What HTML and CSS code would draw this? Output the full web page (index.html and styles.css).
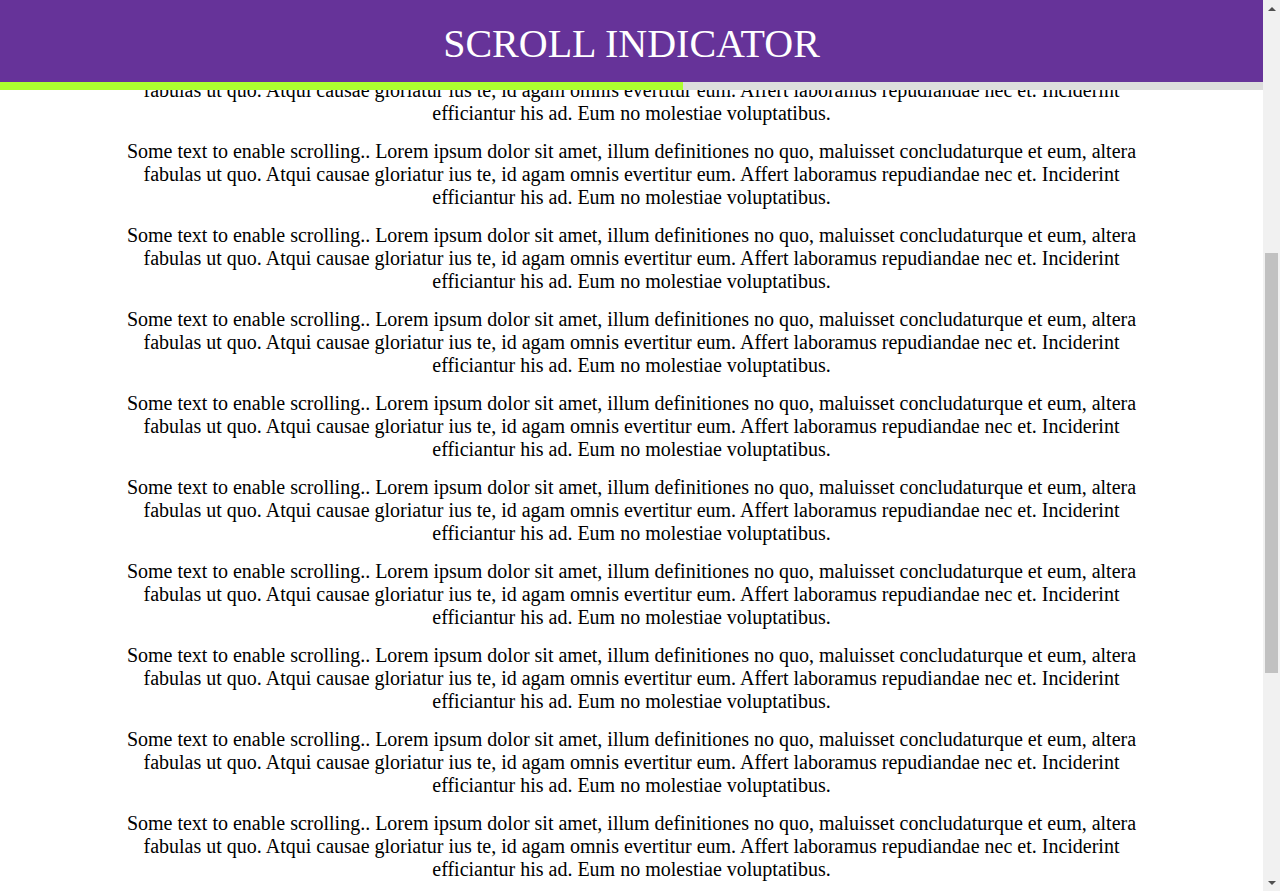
FILE: index.html
```html
<!DOCTYPE html>
<html lang="en">
<head>
<meta charset="utf-8">
<title>Scroll Indicator</title>
<link rel="stylesheet" href="styles.css">
</head>
<body>
<div class="window">
  <div class="viewport">
    <header class="header">
      <div class="title-bar"><h1 class="title">SCROLL INDICATOR</h1></div>
      <div class="progress-container"><div class="progress-bar" style="width: 54.1%"></div></div>
    </header>
    <main class="content">
      <p>Some text to enable scrolling.. Lorem ipsum dolor sit amet, illum definitiones no quo, maluisset concludaturque et eum, altera fabulas ut quo. Atqui causae gloriatur ius te, id agam omnis evertitur eum. Affert laboramus repudiandae nec et. Inciderint efficiantur his ad. Eum no molestiae voluptatibus.</p>
      <p>Some text to enable scrolling.. Lorem ipsum dolor sit amet, illum definitiones no quo, maluisset concludaturque et eum, altera fabulas ut quo. Atqui causae gloriatur ius te, id agam omnis evertitur eum. Affert laboramus repudiandae nec et. Inciderint efficiantur his ad. Eum no molestiae voluptatibus.</p>
      <p>Some text to enable scrolling.. Lorem ipsum dolor sit amet, illum definitiones no quo, maluisset concludaturque et eum, altera fabulas ut quo. Atqui causae gloriatur ius te, id agam omnis evertitur eum. Affert laboramus repudiandae nec et. Inciderint efficiantur his ad. Eum no molestiae voluptatibus.</p>
      <p>Some text to enable scrolling.. Lorem ipsum dolor sit amet, illum definitiones no quo, maluisset concludaturque et eum, altera fabulas ut quo. Atqui causae gloriatur ius te, id agam omnis evertitur eum. Affert laboramus repudiandae nec et. Inciderint efficiantur his ad. Eum no molestiae voluptatibus.</p>
      <p>Some text to enable scrolling.. Lorem ipsum dolor sit amet, illum definitiones no quo, maluisset concludaturque et eum, altera fabulas ut quo. Atqui causae gloriatur ius te, id agam omnis evertitur eum. Affert laboramus repudiandae nec et. Inciderint efficiantur his ad. Eum no molestiae voluptatibus.</p>
      <p>Some text to enable scrolling.. Lorem ipsum dolor sit amet, illum definitiones no quo, maluisset concludaturque et eum, altera fabulas ut quo. Atqui causae gloriatur ius te, id agam omnis evertitur eum. Affert laboramus repudiandae nec et. Inciderint efficiantur his ad. Eum no molestiae voluptatibus.</p>
      <p>Some text to enable scrolling.. Lorem ipsum dolor sit amet, illum definitiones no quo, maluisset concludaturque et eum, altera fabulas ut quo. Atqui causae gloriatur ius te, id agam omnis evertitur eum. Affert laboramus repudiandae nec et. Inciderint efficiantur his ad. Eum no molestiae voluptatibus.</p>
      <p>Some text to enable scrolling.. Lorem ipsum dolor sit amet, illum definitiones no quo, maluisset concludaturque et eum, altera fabulas ut quo. Atqui causae gloriatur ius te, id agam omnis evertitur eum. Affert laboramus repudiandae nec et. Inciderint efficiantur his ad. Eum no molestiae voluptatibus.</p>
      <p>Some text to enable scrolling.. Lorem ipsum dolor sit amet, illum definitiones no quo, maluisset concludaturque et eum, altera fabulas ut quo. Atqui causae gloriatur ius te, id agam omnis evertitur eum. Affert laboramus repudiandae nec et. Inciderint efficiantur his ad. Eum no molestiae voluptatibus.</p>
      <p>Some text to enable scrolling.. Lorem ipsum dolor sit amet, illum definitiones no quo, maluisset concludaturque et eum, altera fabulas ut quo. Atqui causae gloriatur ius te, id agam omnis evertitur eum. Affert laboramus repudiandae nec et. Inciderint efficiantur his ad. Eum no molestiae voluptatibus.</p>
      <p>Some text to enable scrolling.. Lorem ipsum dolor sit amet, illum definitiones no quo, maluisset concludaturque et eum, altera fabulas ut quo. Atqui causae gloriatur ius te, id agam omnis evertitur eum. Affert laboramus repudiandae nec et. Inciderint efficiantur his ad. Eum no molestiae voluptatibus.</p>
    </main>
  </div>
  <div class="scrollbar" aria-hidden="true">
    <div class="arrow arrow-up"></div>
    <div class="track"><div class="thumb"></div></div>
    <div class="arrow arrow-down"></div>
  </div>
</div>
</body>
</html>
```

FILE: styles.css
```css
html, body {
  margin: 0;
  padding: 0;
  height: 100%;
  overflow: hidden;
  background: #ffffff;
}

body {
  font-family: "Liberation Serif", "Times New Roman", serif;
  color: #000000;
}

.window {
  display: flex;
  width: 1280px;
  height: 891px;
}

.viewport {
  position: relative;
  flex: 1;
  height: 100%;
  overflow: hidden;
}

.header {
  position: absolute;
  top: 0;
  left: 0;
  right: 0;
  z-index: 1;
}

.title-bar {
  height: 82px;
  background: #663399;
  display: flex;
  align-items: center;
  justify-content: center;
}

.title {
  margin: 0;
  padding-top: 6px;
  font-weight: normal;
  font-size: 40px;
  color: #ffffff;
  line-height: 1;
}

.progress-container {
  height: 8px;
  background: #dddddd;
}

.progress-bar {
  height: 8px;
  background: #adff2f;
}

.content {
  width: 80%;
  margin: 0 auto;
  padding-top: 41px;
  text-align: center;
  font-size: 20px;
  line-height: 23px;
}

.content p {
  margin: 15px 0;
}

.scrollbar {
  width: 17px;
  height: 100%;
  background: #f1f1f1;
  display: flex;
  flex-direction: column;
}

.arrow {
  height: 17px;
  display: flex;
  align-items: center;
  justify-content: center;
}

.arrow-up::before {
  content: "";
  border-left: 4px solid transparent;
  border-right: 4px solid transparent;
  border-bottom: 4px solid #505050;
}

.arrow-down::before {
  content: "";
  border-left: 4px solid transparent;
  border-right: 4px solid transparent;
  border-top: 4px solid #505050;
}

.track {
  flex: 1;
  padding-top: 236px;
}

.thumb {
  margin: 0 2px;
  height: 420px;
  background: #c1c1c1;
}
```
